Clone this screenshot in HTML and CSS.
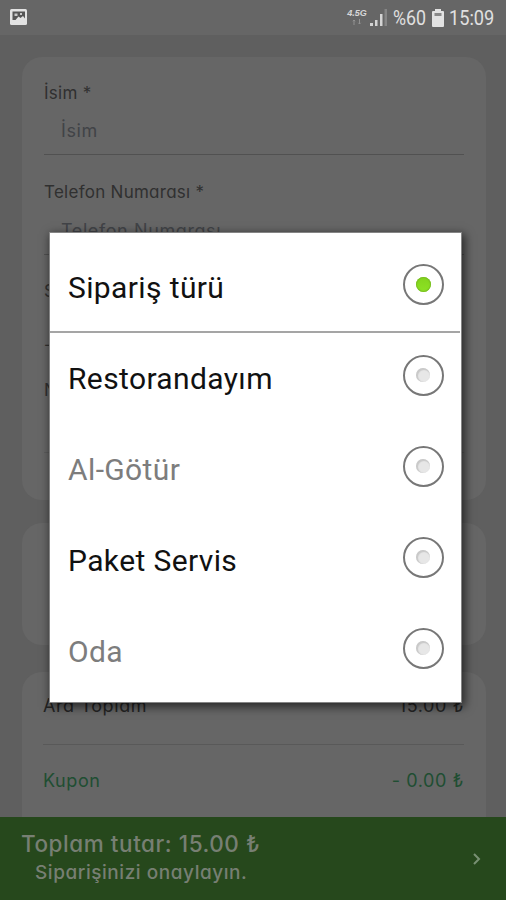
FILE: index.html
```html
<!DOCTYPE html>
<html lang="tr">
<head>
<meta charset="utf-8">
<meta name="viewport" content="width=device-width">
<title>Sipariş türü</title>
<link rel="stylesheet" href="styles.css">
</head>
<body>
<div class="screen">
  <header class="status">
    <svg class="photo" width="17" height="16" viewBox="0 0 17 16"><rect width="17" height="16" rx="1.500" fill="#e2e2e2"/><path d="M2.500 2.500h12.500v7l-2-2.500-2.500 2-2-1.500-3 3.500h-3z" fill="#555"/><path d="M4.500 4.500h3v2.500h-3zM10 4h2v2h-2z" fill="#c8c8c8"/></svg>
    <div class="status-right">
      <div class="net"><span>4.5G</span><svg width="10" height="6" viewBox="0 0 10 6"><path d="M2 6V1M.8 2.200L2 1l1.200 1.200M7.500 0v5M6.300 3.800l1.200 1.200 1.200-1.200" fill="none" stroke="#929292"/></svg></div>
      <svg class="signal" width="18" height="17" viewBox="0 0 18 17"><path d="M0 14h3v3H0zM5 11h2.500v6H5zM10 5h2.500v12H10z" fill="#d4d4d4"/><path d="M14.500 0h2.500v17h-2.500z" fill="#858585"/></svg>
      <span class="percent">%60</span>
      <svg class="battery" width="12" height="18" viewBox="0 0 12 18"><path d="M3 0h6v2h2q1 0 1 1v14q0 1-1 1H1q-1 0-1-1V3q0-1 1-1h2z" fill="#e2e2e2"/><path d="M2.500 4h7v3h-7z" fill="#888"/></svg>
      <span class="clock">15:09</span>
    </div>
  </header>
  <main class="page">
    <section class="card form">
      <label class="label">İsim *</label>
      <div class="field name-field">İsim</div>
      <label class="label">Telefon Numarası *</label>
      <div class="field phone-field">Telefon Numarası</div>
      <label class="label">Sipariş türü</label>
      <div class="select">-</div>
      <label class="label">Not</label>
      <div class="note"></div>
    </section>
    <section class="card middle"></section>
    <section class="card totals">
      <div class="total subtotal"><span>Ara Toplam</span><span>15.00 ₺</span></div>
      <div class="total coupon"><span>Kupon</span><span>- 0.00 ₺</span></div>
    </section>
  </main>
  <footer class="checkout">
    <div><div class="sum">Toplam tutar: 15.00 ₺</div><div class="confirm">Siparişinizi onaylayın.</div></div>
    <svg width="10" height="14" viewBox="0 0 10 14"><path d="M2 2l5 5-5 5" fill="none" stroke="#789073" stroke-width="2"/></svg>
  </footer>
  <div class="dialog" role="dialog">
    <div class="option"><span>Sipariş türü</span><i class="radio on"></i></div>
    <div class="option first"><span>Restorandayım</span><i class="radio"></i></div>
    <div class="option disabled"><span>Al-Götür</span><i class="radio"></i></div>
    <div class="option"><span>Paket Servis</span><i class="radio"></i></div>
    <div class="option disabled"><span>Oda</span><i class="radio"></i></div>
  </div>
</div>
</body>
</html>
```
FILE: styles.css
```css
* { box-sizing: border-box; }
body { margin: 0; background: #5f5f5f; }
.screen { position: relative; width: 506px; height: 900px; overflow: hidden; display: flex; flex-direction: column; background: #5f5f5f; font-family: Inter, "Open Sans", sans-serif; font-feature-settings: "cv11"; color: #303030; }
.status { height: 35px; flex: none; background: #666; display: flex; justify-content: space-between; padding: 9px 11px 0 10px; }
.status-right { display: flex; font-family: Roboto, sans-serif; color: #e0e0e0; }
.net { width: 20px; font: italic bold 9px/9px "Liberation Sans", sans-serif; color: #d8d8d8; margin-right: 3px; display: flex; flex-direction: column; align-items: center; }
.net svg { margin-top: 1px; }
.signal { margin-right: 5px; }
.percent, .clock { font-size: 20px; line-height: 19px; transform: scaleX(.89); transform-origin: left; white-space: nowrap; }
.percent { width: 34px; margin-right: 5px; }
.clock { width: 46px; margin-left: 5px; transform: scaleX(.91); }
.page { flex: 1; min-height: 0; overflow: hidden; padding: 22px 20px 0 22px; display: flex; flex-direction: column; }
.card { background: #666; border-radius: 20px; padding: 0 22px; flex: none; }
.form { height: 443px; padding-top: 25px; margin-bottom: 23px; display: flex; flex-direction: column; }
.middle { height: 122px; margin-bottom: 27px; }
.totals { height: 170px; padding-top: 20px; }
.label { font-size: 17px; line-height: 22px; letter-spacing: .27px; }
.field { padding-left: 17px; font-size: 18px; line-height: 24px; letter-spacing: .6px; color: #414347; border-bottom: 1px solid #515151; }
.name-field { height: 51px; padding-top: 15px; margin-bottom: 26px; }
.phone-field { height: 52px; padding-top: 16px; margin-bottom: 25px; }
.select { height: 53px; padding-top: 31px; margin-bottom: 24px; line-height: 22px; }
.note { height: 52px; border-bottom: 1px solid #5c5c5c; }
.total { display: flex; justify-content: space-between; font-size: 18px; line-height: 28px; letter-spacing: .6px; margin-left: -1px; }
.subtotal { height: 53px; border-bottom: 1px solid #595959; color: #242424; }
.coupon { padding-top: 22px; color: #204e32; }
.checkout { height: 83px; flex: none; background: #26481c; color: #777f73; display: flex; justify-content: space-between; align-items: center; padding: 0 24px 2px 21px; font-weight: 500; white-space: nowrap; }
.checkout svg { margin-top: 2px; }
.sum { font-size: 22.500px; line-height: 30px; letter-spacing: .55px; }
.confirm { font-size: 19px; line-height: 28px; letter-spacing: .55px; padding-left: 14px; }
.dialog { position: absolute; left: 50px; top: 233px; width: 411px; height: 469px; background: #fff; padding: 6px 0 8px; box-shadow: 0 0 0 1px #858585, 2px 3px 9px 2px rgba(0,0,0,.6); font-family: Roboto, sans-serif; color: #111; }
.option { height: 91px; display: flex; align-items: center; justify-content: space-between; padding: 0 17px 0 18px; }
.option span { font-size: 30px; line-height: 38px; letter-spacing: .38px; padding-top: 6px; white-space: nowrap; }
.first { background: linear-gradient(#a5a5a5, #a5a5a5) 0 1px / 410px 2px no-repeat; }
.disabled { color: #7d7d7d; }
.radio { width: 41px; height: 41px; border: 2px solid #777; border-radius: 50%; display: flex; align-items: center; justify-content: center; flex: none; padding: 0 1px 1px 0; }
.radio::after { content: ""; width: 14px; height: 14px; border-radius: 50%; background: #e7e7e7; box-shadow: inset 1px 1px 1px 1px #c9c9c9; }
.radio.on::after { width: 15px; height: 15px; background: linear-gradient(#83d51d, #8de224); box-shadow: inset 0 0 1px 1px #79bd24; }
```
